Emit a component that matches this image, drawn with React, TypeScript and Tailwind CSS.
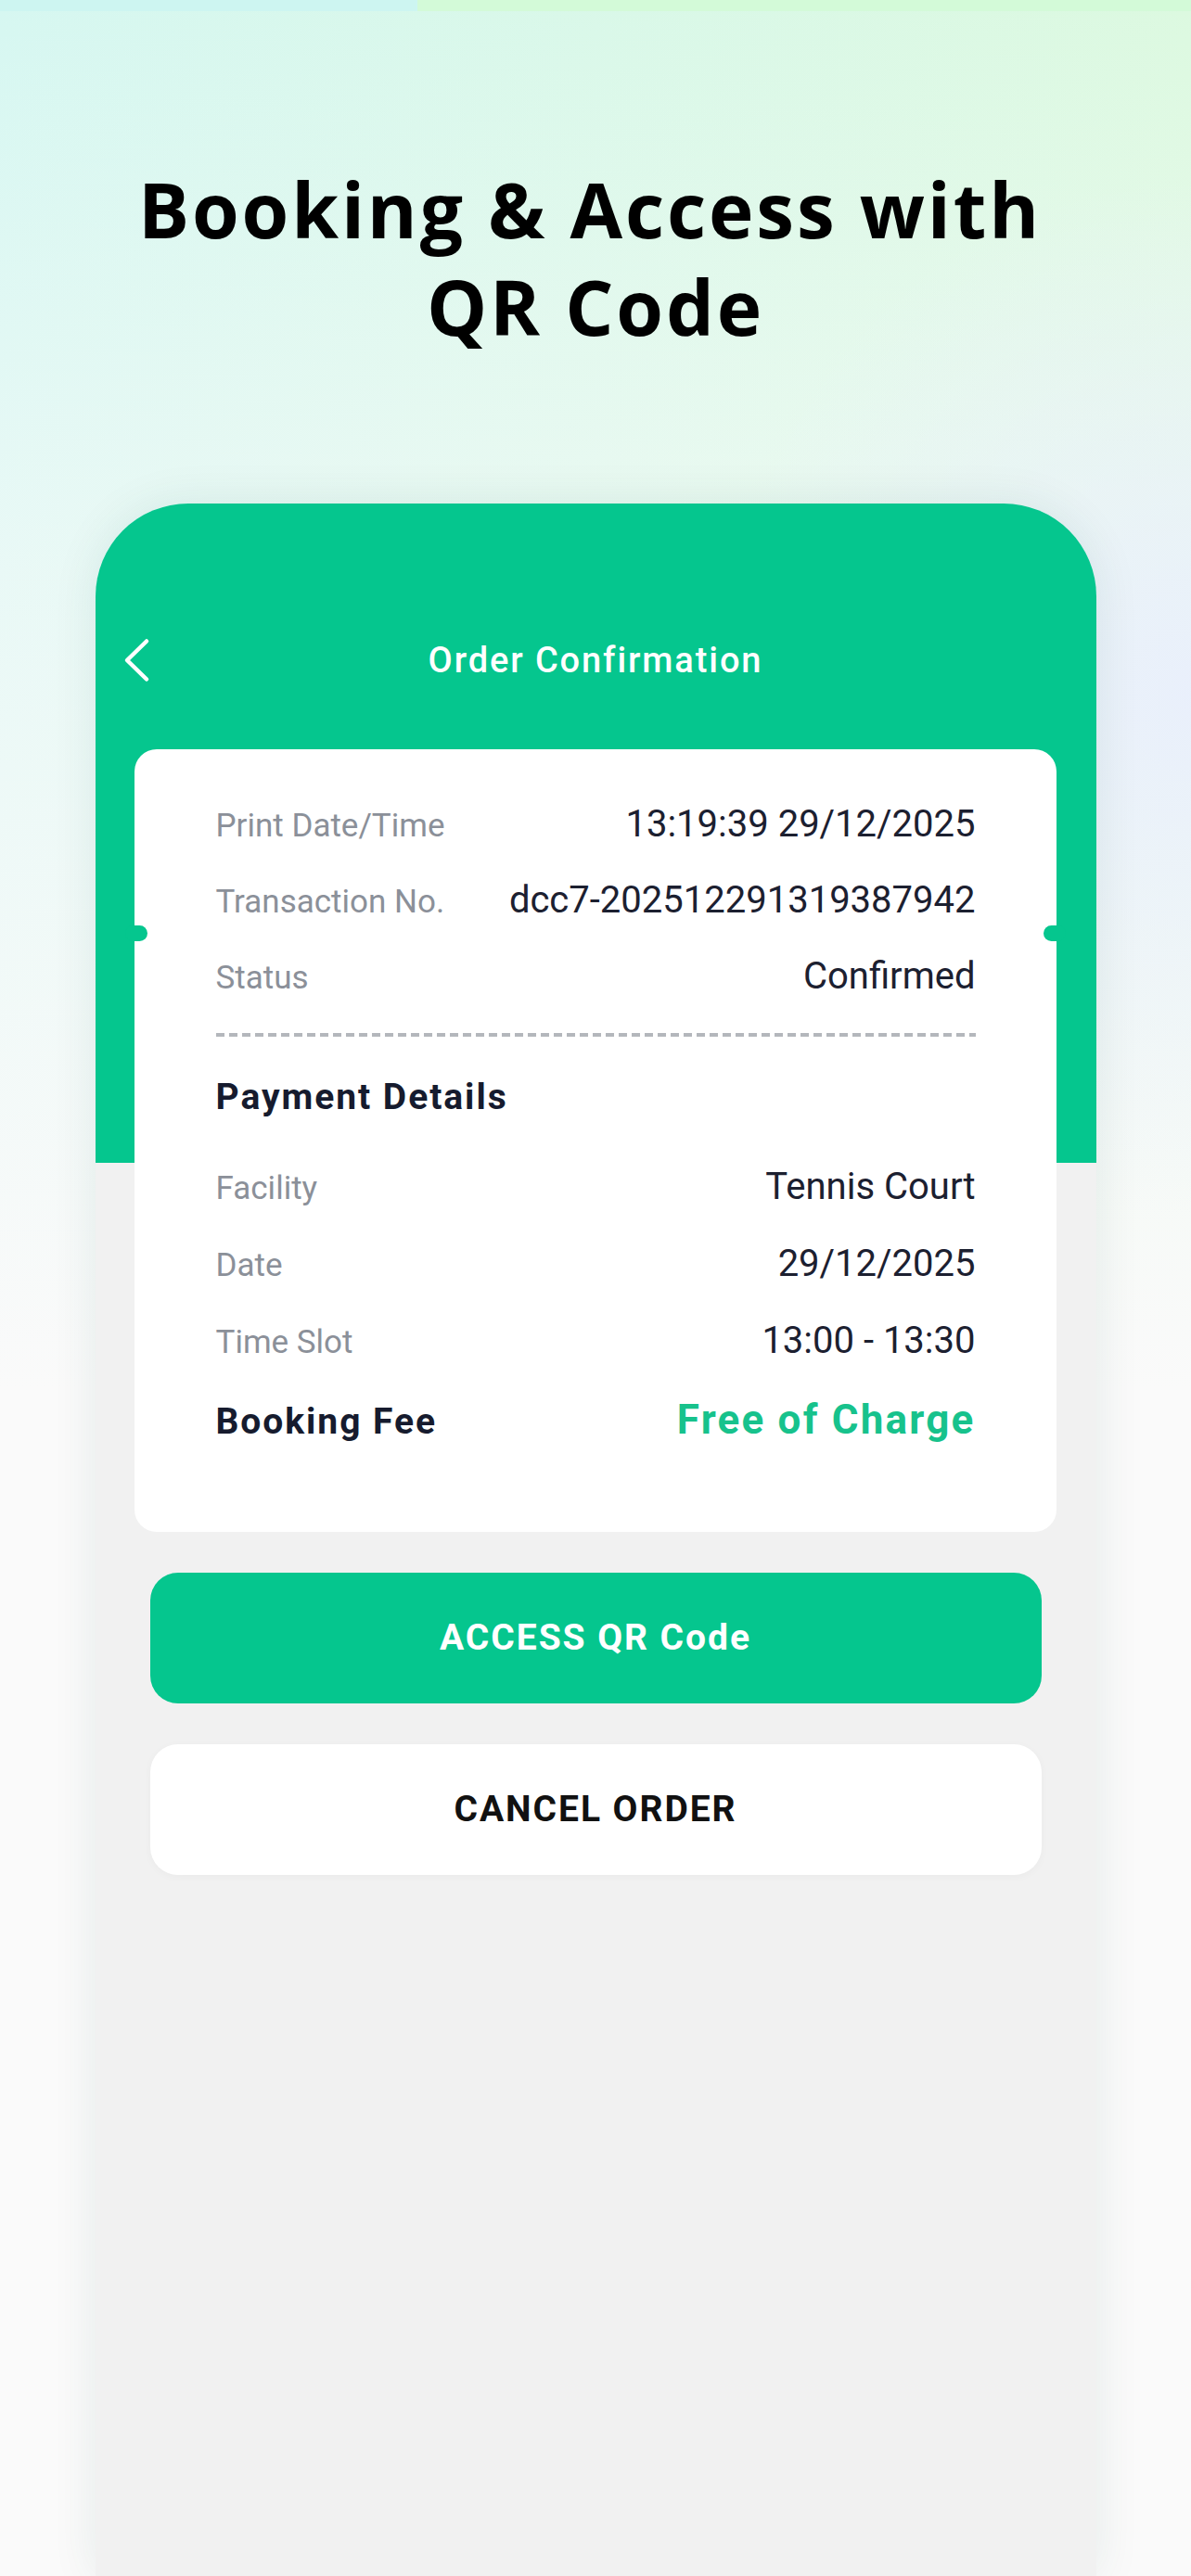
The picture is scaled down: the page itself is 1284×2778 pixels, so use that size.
import React from "react";

const green = "#05c68e";

function Row({ label, value }: { label: string; value: string }) {
  return (
    <div className="flex h-[48px] items-baseline justify-between">
      <span className="text-[35px] leading-[48px] text-[#8b9099]">{label}</span>
      <span className="text-[40px] leading-[48px] text-[#1c2030]">{value}</span>
    </div>
  );
}

function BackIcon() {
  return (
    <svg width="30" height="48" viewBox="0 0 30 48" fill="none">
      <path d="M26 3.5 L5 24 L26 44.5" stroke="white" strokeWidth="4.5" strokeLinecap="round" strokeLinejoin="round" />
    </svg>
  );
}

export default function App() {
  return (
    <div className="relative flex h-[2778px] w-full flex-col overflow-hidden bg-[radial-gradient(ellipse_520px_560px_at_100%_27%,rgba(233,239,252,0.95),rgba(233,239,252,0)),linear-gradient(to_bottom,rgba(250,250,250,0)_0px,rgba(248,250,250,0.55)_600px,#fafafa_1500px),linear-gradient(to_right,#d6f7f1,#dcf9e0)] font-['Roboto',sans-serif]">
      {/* thin top strip */}
      <div className="flex h-[12px] w-full">
        <div className="w-[450px] bg-[#cdf5f1]" />
        <div className="flex-1 bg-[#d3fad8]" />
      </div>

      <h1 className="mt-[161px] text-center font-['Open_Sans',sans-serif] text-[82px] font-bold leading-[105px] tracking-[0.035em] text-black">
        <span className="pr-[12px]">Booking &amp; Access with</span>
        <br />
        QR Code
      </h1>

      {/* phone screen */}
      <div className="mx-auto mt-[160px] flex w-[1079px] flex-1 flex-col rounded-t-[100px] bg-[linear-gradient(to_bottom,#05c68e_711px,#f1f1f1_711px)] shadow-[0_0_50px_rgba(20,80,70,0.09)]">
        <div className="mt-[137px] grid h-[64px] grid-cols-[1fr_auto_1fr] items-center">
          <div className="pl-[29px]">
            <BackIcon />
          </div>
          <div className="text-[38px] font-medium leading-[64px] tracking-[0.05em] text-white">Order Confirmation</div>
          <div />
        </div>

        <div className="relative mt-[64px] ml-[42px] mr-[43px] rounded-[24px] bg-white pb-[95px] pl-[88px] pr-[87px] pt-[57px]">
          <span className="absolute left-[-10px] top-[190px] h-[17px] w-[24px] rounded-full bg-[#05c68e]" />
          <span className="absolute right-[-10px] top-[190px] h-[17px] w-[24px] rounded-full bg-[#05c68e]" />

          <div className="flex flex-col gap-[34px]">
            <Row label="Print Date/Time" value="13:19:39 29/12/2025" />
            <Row label="Transaction No." value="dcc7-202512291319387942" />
            <Row label="Status" value="Confirmed" />
          </div>

          <div className="mt-[37px] h-[4px] bg-[repeating-linear-gradient(to_right,#b4b7bc_0px,#b4b7bc_9px,transparent_9px,transparent_14px)]" />

          <div className="mt-[41px] text-[39px] font-bold leading-[48px] tracking-[0.05em] text-[#161b2e]">Payment Details</div>

          <div className="mt-[49px] flex flex-col gap-[35px]">
            <Row label="Facility" value="Tennis Court" />
            <Row label="Date" value="29/12/2025" />
            <Row label="Time Slot" value="13:00 - 13:30" />
          </div>

          <div className="mt-[35px] flex h-[52px] items-baseline justify-between">
            <span className="text-[39px] font-bold leading-[52px] tracking-[0.05em] text-[#161b2e]">Booking Fee</span>
            <span className="text-[44px] font-bold leading-[52px] tracking-[0.05em] text-[#17c28c]">Free of Charge</span>
          </div>
        </div>

        <button
          className="mx-[59px] mt-[44px] flex h-[141px] items-center justify-center rounded-[30px] text-[39px] font-bold tracking-[0.05em] text-white"
          style={{ backgroundColor: green }}
        >
          ACCESS QR Code
        </button>
        <button className="mx-[59px] mt-[44px] flex h-[141px] items-center justify-center rounded-[30px] bg-white text-[39px] font-bold tracking-[0.05em] text-[#111111] shadow-[0_2px_10px_rgba(0,0,0,0.03)]">
          CANCEL ORDER
        </button>
      </div>
    </div>
  );
}
